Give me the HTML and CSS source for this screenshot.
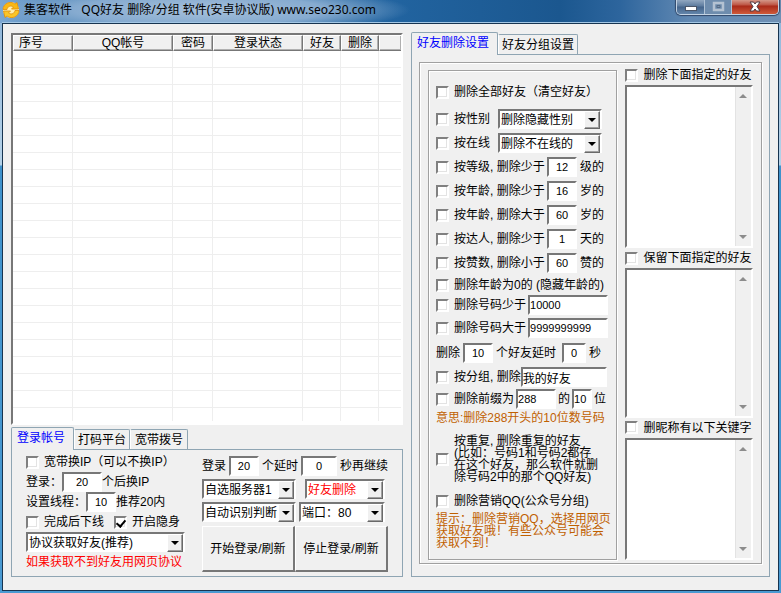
FILE: index.html
```html
<!DOCTYPE html>
<html lang="zh-CN">
<head>
<meta charset="utf-8">
<title>集客软件 QQ好友 删除/分组</title>
<link rel="stylesheet" href="styles.css">
</head>
<body>
<div class="window">
  <header class="titlebar">
    <svg class="logo" viewBox="0 0 18 18" aria-hidden="true">
      <path d="M1 9 C1 5 4 1 9 1 C14 1 17 5 17 9 C17 13 14 17 9 17 C4 17 1 13 1 9Z" fill="#fff0b0"/>
      <path d="M1 8.500 C1 3 8 -1 13 3 L15 1.500 L16.500 8 H9.500 L11.500 6 C8.500 4 5.500 5.500 5 8.500 Z" fill="#f9b814" stroke="#e08c08" stroke-width=".8"/>
      <path d="M17 9.500 C17 15 10 19 5 15 L3 16.500 L1.500 10 H8.500 L6.500 12 C9.500 14 12.500 12.500 13 9.500 Z" fill="#fbc628" stroke="#e08c08" stroke-width=".8"/>
    </svg>
    <h1 class="title">集客软件&nbsp;&nbsp; QQ好友 删除/分组 软件(安卓协议版) www.seo230.com</h1>
    <div class="controls">
      <button class="control minimize" aria-label="最小化"><svg viewBox="0 0 14 12"><rect x="1.500" y="5.500" width="11" height="4" fill="#fff" stroke="#4a5568"/></svg></button>
      <button class="control maximize" aria-label="最大化" disabled><svg viewBox="0 0 14 12"><path d="M3 2h9v7H3z" fill="none" stroke="#b4c2d2" stroke-width="2.500"/><path d="M6 4.500h3v2H6z" fill="#7d93ad" stroke="#566b86"/></svg></button>
      <button class="control close" aria-label="关闭"><svg viewBox="0 0 14 12"><path d="M2 1h3.500L7 3 8.500 1H12L9 5.500 12 10H8.500L7 8 5.500 10H2L5 5.500Z" fill="#fff" stroke="#4e3b45"/></svg></button>
    </div>
  </header>
  <main class="client">
    <section class="left">
      <div class="list">
        <table>
          <colgroup><col class="c60"><col class="c100"><col class="c40"><col class="c90"><col class="c38"><col class="c38"><col></colgroup>
          <thead><tr><th class="start">序号</th><th>QQ帐号</th><th>密码</th><th>登录状态</th><th>好友</th><th>删除</th><th></th></tr></thead>
          <tbody>
            <tr><td><td><td><td><td><td><td></tr>
            <tr><td><td><td><td><td><td><td></tr>
            <tr><td><td><td><td><td><td><td></tr>
            <tr><td><td><td><td><td><td><td></tr>
            <tr><td><td><td><td><td><td><td></tr>
            <tr><td><td><td><td><td><td><td></tr>
            <tr><td><td><td><td><td><td><td></tr>
            <tr><td><td><td><td><td><td><td></tr>
            <tr><td><td><td><td><td><td><td></tr>
            <tr><td><td><td><td><td><td><td></tr>
            <tr><td><td><td><td><td><td><td></tr>
            <tr><td><td><td><td><td><td><td></tr>
            <tr><td><td><td><td><td><td><td></tr>
            <tr><td><td><td><td><td><td><td></tr>
            <tr><td><td><td><td><td><td><td></tr>
            <tr><td><td><td><td><td><td><td></tr>
            <tr><td><td><td><td><td><td><td></tr>
            <tr><td><td><td><td><td><td><td></tr>
            <tr><td><td><td><td><td><td><td></tr>
            <tr><td><td><td><td><td><td><td></tr>
            <tr><td><td><td><td><td><td><td></tr>
            <tr class="last"><td><td><td><td><td><td><td></tr>
          </tbody>
        </table>
      </div>
      <div class="tabs" role="tablist">
        <button class="tab active narrow" role="tab" aria-selected="true">登录帐号</button>
        <button class="tab" role="tab">打码平台</button>
        <button class="tab" role="tab">宽带拨号</button>
      </div>
      <div class="panel login">
        <div class="login-options">
          <div class="row short"><label class="check"><input type="checkbox">宽带换IP（可以不换IP）</label></div>
          <div class="row short close-set"><label for="batch">登录：</label><input class="field w40" id="batch" value="20"><span>个后换IP</span></div>
          <div class="row short close-set"><label for="threads">设置线程：</label><input class="field w30" id="threads" value="10"><span>推荐20内</span></div>
          <div class="row short wide"><label class="check"><input type="checkbox">完成后下线</label><label class="check"><input type="checkbox" checked>开启隐身</label></div>
          <div class="row short"><span class="combo grow"><select aria-label="协议"><option>协议获取好友(推荐)</option></select></span></div>
          <p class="row short red">如果获取不到好友用网页协议</p>
        </div>
        <div class="login-run">
          <div class="row"><label for="logins">登录</label><input class="field w30" id="logins" value="20"><label for="wait">个延时</label><input class="field w36" id="wait" value="0"><span>秒再继续</span></div>
          <div class="row spaced"><span class="combo w94"><select aria-label="服务器"><option>自选服务器1</option></select></span><span class="combo w80"><select class="red" aria-label="操作"><option>好友删除</option></select></span></div>
          <div class="row"><span class="combo w94"><select aria-label="识别"><option>自动识别判断</option></select></span><span class="combo w86"><select aria-label="端口"><option>端口：80</option></select></span></div>
          <div class="actions"><button class="push">开始登录/刷新</button><button class="push">停止登录/刷新</button></div>
        </div>
      </div>
    </section>

    <section class="right">
      <div class="tabs" role="tablist">
        <button class="tab active" role="tab" aria-selected="true">好友删除设置</button>
        <button class="tab" role="tab">好友分组设置</button>
      </div>
      <div class="panel settings">
        <div class="frame outer">
          <div class="frame rules">
            <div class="row first"><label class="check"><input type="checkbox">删除全部好友（清空好友）</label></div>
            <div class="row pick"><label class="check"><input type="checkbox">按性别</label><span class="combo w104"><select aria-label="性别"><option>删除隐藏性别</option></select></span></div>
            <div class="row pick"><label class="check"><input type="checkbox">按在线</label><span class="combo w104"><select aria-label="在线"><option>删除不在线的</option></select></span></div>
            <div class="row limit"><label class="check"><input type="checkbox">按等级, 删除少于</label><input class="field w30" aria-label="等级" value="12"><span>级的</span></div>
            <div class="row limit"><label class="check"><input type="checkbox">按年龄, 删除少于</label><input class="field w30" aria-label="最小年龄" value="16"><span>岁的</span></div>
            <div class="row limit"><label class="check"><input type="checkbox">按年龄, 删除大于</label><input class="field w30" aria-label="最大年龄" value="60"><span>岁的</span></div>
            <div class="row limit"><label class="check"><input type="checkbox">按达人, 删除少于</label><input class="field w30" aria-label="达人天数" value="1"><span>天的</span></div>
            <div class="row limit"><label class="check"><input type="checkbox">按赞数, 删除小于</label><input class="field w30" aria-label="赞数" value="60"><span>赞的</span></div>
            <div class="row short"><label class="check"><input type="checkbox">删除年龄为0的 (隐藏年龄的)</label></div>
            <div class="row short snug"><label class="check"><input type="checkbox">删除号码少于</label><input class="field text w80" aria-label="号码下限" value="10000"></div>
            <div class="row tall snug"><label class="check"><input type="checkbox">删除号码大于</label><input class="field text w80" aria-label="号码上限" value="9999999999"></div>
            <div class="row"><label for="count">删除</label><input class="field w30" id="count" value="10"><label class="delay" for="delay">个好友延时</label><input class="field w24" id="delay" value="0"><span>秒</span></div>
            <div class="row close-set"><label class="check"><input type="checkbox">按分组, 删除</label><input class="field text name w86" aria-label="分组" value="我的好友"></div>
            <div class="row short snug"><label class="check"><input type="checkbox">删除前缀为</label><input class="field text w40" aria-label="前缀" value="288"><span>的</span><input class="field text w20" aria-label="位数" value="10"><span>位</span></div>
            <p class="row hint">意思:删除288开头的10位数号码</p>
            <div class="row block"><label class="check"><input type="checkbox"><span>按重复, 删除重复的好友<br>(比如：号码1和号码2都存<br>在这个好友，那么软件就删<br>除号码2中的那个QQ好友)</span></label></div>
            <div class="row short"><label class="check"><input type="checkbox">删除营销QQ(公众号分组)</label></div>
            <p class="tip">提示：删除营销QQ，选择用网页<br>获取好友哦！有些公众号可能会<br>获取不到！</p>
          </div>
          <div class="memos">
            <label class="check"><input type="checkbox">删除下面指定的好友</label>
            <div class="memo"><textarea aria-label="删除下面指定的好友"></textarea><span class="track"></span></div>
            <label class="check"><input type="checkbox">保留下面指定的好友</label>
            <div class="memo"><textarea aria-label="保留下面指定的好友"></textarea><span class="track"></span></div>
            <label class="check"><input type="checkbox">删昵称有以下关键字</label>
            <div class="memo"><textarea aria-label="删昵称有以下关键字"></textarea><span class="track"></span></div>
          </div>
        </div>
      </div>
    </section>
  </main>
</div>
</body>
</html>
```
FILE: styles.css
```css
* { box-sizing: border-box; }

body, h1, p { margin: 0; }

body, button, input, select, textarea {
  font: 12px/16px "Liberation Sans", "Noto Sans CJK SC", sans-serif;
  color: #000;
}

.window {
  display: flex;
  flex-direction: column;
  min-height: 100vh;
  padding: 0 2px 2px;
  background: linear-gradient(#8db4d9, #b5d2e8 165px, #3f92cc 166px, #4a9ad2);
}

/* Title bar */
.titlebar {
  display: flex;
  align-items: flex-start;
  height: 23px;
  margin: 0 -2px;
  padding: 0 2px;
  background:
    radial-gradient(ellipse 210px 24px at 200px 10px, #a5c0db 0, #86abd0 60%, transparent 100%),
    linear-gradient(90deg, #7ba7d3, #4e86b8 60px, #21639f 400px, #1b578f 560px, #2d659d 620px, #6289b3 690px, #6f90b5);
}

.logo { width: 18px; height: 18px; margin: 1px 4px 0 0; flex: none; }

.title {
  flex: 1;
  font: 12px/20px "Noto Sans", "Noto Sans CJK SC", sans-serif;
  white-space: nowrap;
}

.controls {
  display: flex;
  height: 15px;
  border: 1px solid #c3d3e3;
  border-top: 0;
  border-radius: 0 0 5px 5px;
  box-shadow: 0 0 1px 1px #31486a;
  overflow: hidden;
}

.control {
  width: 28px;
  padding: 0;
  border: 0;
  border-right: 1px solid #afc2d6;
  background: linear-gradient(#91a7c0, #5e7c9f 6px, #45658c 7px, #6385aa);
}

.control svg { display: block; width: 14px; height: 12px; margin: -1px auto 0; }
.maximize { width: 27px; background: #6e8cad; }
.close { width: 46px; border-right: 0; background: linear-gradient(#d49788, #bd5544 5px, #a92a19 6px, #cf5a3a); }

/* Client area */
.client {
  display: grid;
  grid-template-columns: 392fr 359fr;
  gap: 8px;
  flex: 1;
  padding: 8px 8px 13px;
  border: 1px solid #173450;
  background: #f0f0f0;
  box-shadow: 0 -1px #a3c7e5;
}

.left, .right { display: flex; flex-direction: column; min-width: 0; }
.left { padding-top: 1px; }

/* Account list */
.list {
  flex: 1;
  margin-bottom: 2px;
  border: 2px solid;
  border-color: #777 #fff #fff #777;
  background: #fff;
}

.list table { width: 100%; table-layout: fixed; border-collapse: separate; border-spacing: 0; }
.c60 { width: 60px; }
.c100 { width: 100px; }
.c40 { width: 40px; }
.c90 { width: 90px; }
.c38 { width: 38px; }

.list th {
  height: 16px;
  padding: 0;
  border: 1px solid;
  border-color: #fff #777 #777 #fff;
  background: #f0f0f0;
  font-weight: normal;
  line-height: 14px;
  box-shadow: inset -1px -1px #b0b0b0;
}

.list .start { padding-left: 5px; text-align: left; }
.list td { height: 17px; padding: 0; border: solid #eee; border-width: 0 1px 1px 0; }
.list td:last-child, .list th:last-child { border-right: 0; }
.list .last td { height: 13px; border-bottom: 0; }

/* Tabs */
.tabs { display: flex; align-items: flex-end; height: 22px; }

.tab {
  height: 20px;
  padding: 0 3px;
  border: 1px solid #8fa5b3;
  border-bottom: 0;
  border-left-color: #fff;
  border-radius: 2px 2px 0 0;
  background: #f0f0f0;
  white-space: nowrap;
}

.tab + .tab + .tab { padding: 0 4px; }

.tab.active {
  z-index: 1;
  height: 23px;
  margin-bottom: -1px;
  padding: 0 8px 2px 5px;
  border-left-color: #8fa5b3;
  color: #00f;
}

.panel { border: 1px solid #8fa5b3; background: #f0f0f0; }

/* Form rows */
.row { display: flex; align-items: center; gap: 3px; height: 24px; white-space: nowrap; }
.short { height: 20px; }
.tall { height: 26px; }
.snug { gap: 2px; }
.close-set { gap: 0; }
.wide { gap: 10px; }
.spaced { gap: 9px; }
.pick { gap: 8px; }
.red { color: #f00; }

.check { display: flex; align-items: center; gap: 5px; white-space: nowrap; }

.check input {
  appearance: none;
  flex: none;
  width: 13px;
  height: 13px;
  margin: 0;
  border: 2px solid;
  border-color: #808080 #fff #fff #808080;
  background: #fff;
  box-shadow: inset -1px -1px #e3e3e3;
}

.check input:checked::after {
  content: "";
  display: block;
  width: 4px;
  height: 7px;
  margin-left: 2px;
  border: solid #000;
  border-width: 0 2px 2px 0;
  rotate: 40deg;
}

.field {
  height: 20px;
  min-width: 0;
  padding: 0;
  border: 2px solid;
  border-color: #777 #fff #fff #777;
  border-radius: 0;
  background: #fff;
  font-size: 11px;
  text-align: center;
}

.text { text-align: left; }
.name { font-size: 12px; }
.w20 { width: 20px; }
.w24 { width: 24px; }
.w30 { width: 30px; }
.w36 { width: 36px; }
.w40 { width: 40px; }
.w80 { width: 80px; }
.w86 { width: 86px; }
.w94 { width: 94px; }
.w104 { width: 104px; }
.grow { flex: 1; }

/* Drop-down with a raised arrow button */
.combo {
  display: grid;
  grid-template-columns: 1fr 16px;
  align-items: center;
  height: 20px;
  border: 2px solid;
  border-color: #777 #fff #fff #777;
  background: #fff;
}

.combo select {
  grid-area: 1 / 1 / 2 / 3;
  appearance: none;
  width: 100%;
  height: 16px;
  padding: 0 0 0 1px;
  border: 0;
  background: none;
}

.combo select.red { color: #f00; }

.combo::before, .combo::after { content: ""; grid-area: 1 / 2; pointer-events: none; }

.combo::before {
  height: 16px;
  border: 1px solid;
  border-color: #fff #696969 #696969 #fff;
  background: #f0f0f0;
  box-shadow: inset -1px -1px #a0a0a0;
}

.combo::after {
  justify-self: center;
  border: solid transparent;
  border-width: 4px 4px 0;
  border-top-color: #000;
}

/* Login panel */
.login { display: flex; gap: 17px; padding: 2px 14px 4px; }
.login-options { width: 160px; }
.login-run { flex: 1; padding-top: 2px; }
.login-run .row { height: 23px; }

.actions { display: grid; grid-template-columns: 1fr 1fr; margin-top: 3px; }

.push {
  height: 46px;
  padding: 0;
  border: solid;
  border-width: 1px 2px 2px 1px;
  border-color: #fff #777 #777 #fff;
  border-radius: 0;
  background: #f0f0f0;
  white-space: nowrap;
}

/* Settings panel */
.settings { display: flex; flex: 1; padding: 7px 7px 12px; }

.frame {
  border: 1px solid #a0a0a0;
  box-shadow: inset 1px 1px #fff, 1px 1px #fff;
}

.outer {
  display: grid;
  grid-template-columns: 190fr 128fr;
  gap: 8px;
  flex: 1;
  padding: 3px 8px 3px;
}

.rules { min-width: 0; margin-top: 4px; padding: 6px 0 0 7px; }
.first { height: 30px; }
.limit .check { width: 108px; }
.delay { margin-right: 3px; }
.hint { height: 18px; color: #c06000; }
.block { height: 64px; line-height: 12px; }
.tip { padding-top: 2px; color: #c06000; line-height: 12px; white-space: nowrap; }

.memos {
  display: grid;
  grid-template-rows: 18px 163fr 18px 149fr 18px 122fr;
  gap: 1px;
  min-width: 0;
}

.memo {
  display: grid;
  grid-template-columns: 1fr 16px;
  border: 2px solid;
  border-color: #777 #fff #fff #777;
  background: #fff;
}

.memo textarea {
  min-width: 0;
  height: 100%;
  padding: 1px;
  border: 0;
  background: none;
  resize: none;
  overflow: hidden;
}

.track {
  display: flex;
  flex-direction: column;
  justify-content: space-between;
  align-items: center;
  padding: 7px 0;
  border-left: 1px solid #e3e3e3;
  background: #f0f0f0;
}

.track::before, .track::after { content: ""; border: solid transparent; }
.track::before { border-width: 0 4px 4px; border-bottom-color: #8c8c8c; }
.track::after { border-width: 4px 4px 0; border-top-color: #8c8c8c; }
```
